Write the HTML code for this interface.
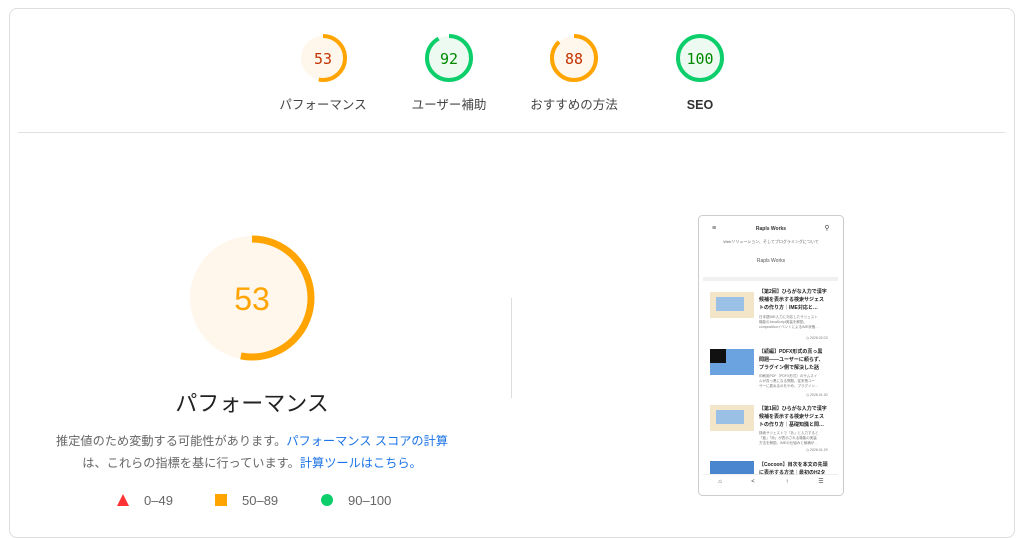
<!DOCTYPE html><html><head><meta charset="utf-8"><style>
*{margin:0;padding:0;box-sizing:border-box}
body{width:1024px;height:524px;background:#fff;font-family:"Liberation Sans","Noto Sans CJK JP",sans-serif;position:relative;overflow:hidden}
.card{position:absolute;left:9px;top:8px;width:1006px;height:530px;background:#fff;border:1px solid #ddd;border-radius:8px}
.abs{position:absolute}
</style></head><body>
<div class="card"></div>
<div class="abs" style="left:18px;top:132px;width:987px;height:1px;background:#e0e0e0"></div>

<svg class="abs" style="left:0;top:0" width="1024" height="524">
<g font-family="DejaVu Sans Mono,Liberation Mono,monospace" font-size="15" text-anchor="middle">
<circle cx="323" cy="58" r="22" fill="#fff6ec"/>
<circle cx="323" cy="58" r="22" fill="none" stroke="#ffa400" stroke-width="4" stroke-dasharray="73.3 200" transform="rotate(-90 323 58)"/>
<text x="323" y="64" fill="#c33300">53</text>
<circle cx="449" cy="58" r="22" fill="#edfaf1"/>
<circle cx="449" cy="58" r="22" fill="none" stroke="#0cce6b" stroke-width="4" stroke-dasharray="127.2 200" transform="rotate(-90 449 58)"/>
<text x="449" y="64" fill="#080">92</text>
<circle cx="574" cy="58" r="22" fill="#fff6ec"/>
<circle cx="574" cy="58" r="22" fill="none" stroke="#ffa400" stroke-width="4" stroke-dasharray="121.6 200" transform="rotate(-90 574 58)"/>
<text x="574" y="64" fill="#c33300">88</text>
<circle cx="700" cy="58" r="22" fill="#edfaf1"/>
<circle cx="700" cy="58" r="22" fill="none" stroke="#0cce6b" stroke-width="4"/>
<text x="700" y="64" fill="#080">100</text>
<circle cx="252" cy="298" r="62" fill="#fff6ec"/>
<circle cx="252" cy="298" r="59" fill="none" stroke="#ffa400" stroke-width="7" stroke-dasharray="196.5 400" transform="rotate(-90 252 298)"/>
<text x="252" y="310" fill="#ffa400" font-size="32" font-family="Liberation Sans,sans-serif">53</text>
</g>
<g font-size="12.5" fill="#444" text-anchor="middle" font-family="Liberation Sans,Noto Sans CJK JP,sans-serif">
<text x="323" y="109">パフォーマンス</text>
<text x="449" y="109">ユーザー補助</text>
<text x="574" y="109">おすすめの方法</text>
<text x="700" y="109" font-weight="bold" fill="#333">SEO</text>
<text x="252" y="411" font-size="22" fill="#222">パフォーマンス</text>
<text x="252" y="445" fill="#666" font-size="12.2">推定値のため変動する可能性があります。<tspan fill="#1a73e8">パフォーマンス スコアの計算</tspan></text>
<text x="252" y="467" fill="#666" font-size="12.2">は、これらの指標を基に行っています。<tspan fill="#1a73e8">計算ツールはこちら。</tspan></text>
</g>
<polygon points="123,494 129,506 117,506" fill="#ff3333"/>
<rect x="215" y="494" width="12" height="12" fill="#ffa400"/>
<circle cx="327" cy="500" r="6" fill="#0cce6b"/>
<g font-size="13" fill="#666" font-family="Liberation Sans,sans-serif">
<text x="144" y="505">0–49</text><text x="242" y="505">50–89</text><text x="348" y="505">90–100</text>
</g>
<line x1="511.5" y1="298" x2="511.5" y2="398" stroke="#ddd"/>
<rect x="698.5" y="215.5" width="145" height="280" rx="4" fill="#fff" stroke="#ccc"/>
<g font-family="Liberation Sans,Noto Sans CJK JP,sans-serif">
<text x="771" y="230" font-size="5" font-weight="bold" text-anchor="middle" fill="#333">Rapls Works</text>
<text x="714" y="230" font-size="7" text-anchor="middle" fill="#444">≡</text>
<text x="827" y="230" font-size="7" text-anchor="middle" fill="#444">⚲</text>
<text x="771" y="243" font-size="4" text-anchor="middle" fill="#666">Webソリューション、そしてプログラミングについて</text>
<text x="771" y="262" font-size="5" text-anchor="middle" fill="#555">Rapls Works</text>
<rect x="703" y="277" width="135" height="4" fill="#eef0f2"/>
<rect x="710" y="292" width="44" height="26" fill="#f3e6c8"/><rect x="716" y="297" width="28" height="14" fill="#9bc0e6"/>
<rect x="710" y="349" width="44" height="26" fill="#6aa3e0"/><rect x="710" y="349" width="16" height="14" fill="#111"/>
<rect x="710" y="405" width="44" height="26" fill="#f3e6c8"/><rect x="716" y="410" width="28" height="14" fill="#9bc0e6"/>
<rect x="710" y="461" width="44" height="13" fill="#4a86d0"/>
<g font-size="5" fill="#222" font-weight="bold">
<text x="759" y="293">【第2回】ひらがな入力で漢字</text><text x="759" y="301">候補を表示する検索サジェス</text><text x="759" y="309">トの作り方｜IME対応と…</text>
<text x="759" y="353">【続編】PDFX形式の真っ黒</text><text x="759" y="361">問題――ユーザーに頼らず、</text><text x="759" y="369">プラグイン側で解決した話</text>
<text x="759" y="410">【第1回】ひらがな入力で漢字</text><text x="759" y="418">候補を表示する検索サジェス</text><text x="759" y="426">トの作り方｜基礎知識と問…</text>
<text x="759" y="466">【Cocoon】目次を本文の先頭</text><text x="759" y="474">に表示する方法｜最初のH2タ</text>
</g>
<g font-size="3.5" fill="#777">
<text x="759" y="318">日本語IME入力に対応したサジェスト</text><text x="759" y="323">機能のJavaScript実装を解説。</text><text x="759" y="328">compositionイベントによるIME状態…</text>
<text x="759" y="377">印刷用PDF（PDFX形式）のサムネイ</text><text x="759" y="382">ルが真っ黒になる問題。従来策ユー</text><text x="759" y="387">ザーに委ねるのをやめ、プラグイン…</text>
<text x="759" y="434">検索サジェストで「あ」と入力すると</text><text x="759" y="439">「亜」「赤」が表示される機能の実装</text><text x="759" y="444">方法を解説。IMEの仕組みと候補が…</text>
<text x="806" y="339">◷ 2026.02.03</text><text x="806" y="396">◷ 2026.01.30</text><text x="806" y="451">◷ 2026.01.29</text>
</g>
<line x1="703" y1="474.5" x2="838" y2="474.5" stroke="#ddd" stroke-width="0.5"/>
<g font-size="6" fill="#444" text-anchor="middle"><text x="720" y="483">⌂</text><text x="753" y="483">&lt;</text><text x="787" y="483">↑</text><text x="821" y="483">☰</text></g>
</g>
</svg>
</body></html>
